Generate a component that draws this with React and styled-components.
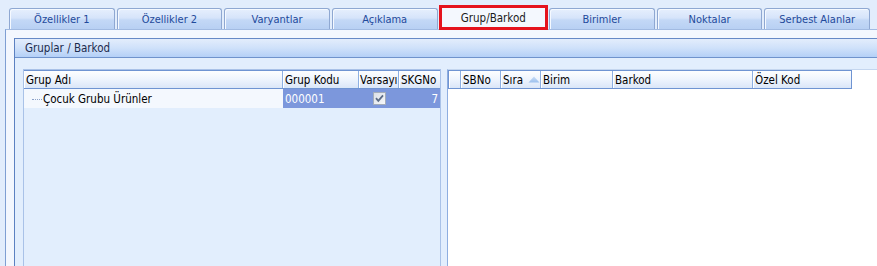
import React from "react";
import styled, { createGlobalStyle } from "styled-components";

const Global = createGlobalStyle`
  html, body { margin: 0; padding: 0; background: #e2edfc; }
  body { font-family: "DejaVu Sans Condensed", "Liberation Sans", Arial, sans-serif; font-size: 11px; }
  #root { width: 877px; height: 266px; overflow: hidden; }
`;

const Page = styled.div`
  width: 877px;
  height: 266px;
  background: #e2edfc;
  display: flex;
  flex-direction: column;
  overflow: hidden;
`;

const TabBar = styled.div`
  height: 29px;
  flex: none;
  display: flex;
  align-items: flex-end;
  gap: 2px;
  padding: 0 7px 0 9px;
  position: relative;
  z-index: 1;
`;

const Tab = styled.div`
  flex: 1;
  box-sizing: border-box;
  height: ${(p) => (p.$active ? "25px" : "21px")};
  margin: ${(p) => (p.$active ? "0 -1px -1px" : "0")};
  border: ${(p) => (p.$active ? "3px solid #e5131d" : "1px solid #8fa8d2")};
  border-bottom: ${(p) => (p.$active ? "3px solid #e5131d" : "none")};
  border-radius: ${(p) => (p.$active ? "0" : "3px 3px 0 0")};
  background: ${(p) =>
    p.$active
      ? "#f4f8fe"
      : "linear-gradient(to bottom, #e6effd 0%, #d6e4fa 45%, #c3d8f6 55%, #b8d0f3 100%)"};
  box-shadow: ${(p) => (p.$active ? "none" : "inset 1px 1px 0 #f5f9ff")};
  color: ${(p) => (p.$active ? "#1b1b1b" : "#1f4a9b")};
  font-size: ${(p) => (p.$active ? "11.5px" : "11px")};
  display: flex;
  align-items: center;
  justify-content: center;
  padding-top: ${(p) => (p.$active ? "0" : "1px")};
  white-space: nowrap;
`;

const Panel = styled.div`
  flex: 1;
  margin-left: 5px;
  border-top: 1px solid #a2bbe2;
  border-left: 1px solid #7f9fd3;
  background: #f3f7fe;
  padding: 8px 0 0 8px;
  display: flex;
  flex-direction: column;
  min-height: 0;
`;

const Group = styled.div`
  flex: 1;
  border-left: 1px solid #5c81c1;
  display: flex;
  flex-direction: column;
  min-height: 0;
`;

const GroupHeader = styled.div`
  height: 18px;
  flex: none;
  border-top: 1px solid #6689c6;
  border-bottom: 1px solid #6f93cc;
  background: linear-gradient(to bottom, #e3edfc 0%, #cfe1fa 50%, #b4d0f7 100%);
  color: #1c2b4d;
  font-size: 11.5px;
  display: flex;
  align-items: center;
  padding-left: 10px;
`;

const GroupBody = styled.div`
  flex: 1;
  background: #e2eefd;
  padding: 11px 0 0 8px;
  display: flex;
  gap: 6px;
  min-height: 0;
  font-size: 11.5px;
`;

const LeftGrid = styled.div`
  width: 416px;
  flex: none;
  border: 1px solid #a9c2e8;
  border-bottom: none;
  background: #e2eefd;
  display: flex;
  flex-direction: column;
`;

const RightGrid = styled.div`
  flex: 1;
  border-left: 1px solid #8eaee0;
  border-top: 1px solid #c4d6ef;
  background: #ffffff;
  display: flex;
  flex-direction: column;
  align-items: flex-start;
`;

const HeaderRow = styled.div`
  display: grid;
  grid-template-columns: ${(p) => p.$cols};
  height: 19px;
  box-sizing: border-box;
  border: 1px solid #6f94d2;
  border-right: ${(p) => (p.$closed ? "1px solid #6f94d2" : "none")};
  border-left: ${(p) => (p.$closed ? "1px solid #6f94d2" : "none")};
  background: linear-gradient(to bottom, #fdfeff 0%, #eef4fd 50%, #dae6f8 100%);
`;

const HeadCell = styled.div`
  box-sizing: border-box;
  border-right: ${(p) => (p.$last ? "none" : "1px solid #8eb0e2")};
  box-shadow: inset 1px 0 0 #ffffff;
  color: #000;
  padding-left: ${(p) => (p.$tight ? "1px" : "2px")};
  display: flex;
  align-items: center;
  white-space: nowrap;
  overflow: hidden;
  gap: 5px;
`;

const DataRow = styled.div`
  display: grid;
  grid-template-columns: ${(p) => p.$cols};
  height: 19px;
`;

const Cell = styled.div`
  background: ${(p) => (p.$selected ? "#7c97dc" : "#f4f8fe")};
  color: ${(p) => (p.$selected ? "#ffffff" : "#000000")};
  display: flex;
  align-items: center;
  justify-content: ${(p) => p.$align || "flex-start"};
  padding: 0 2px 0 ${(p) => p.$indent || "2px"};
  white-space: nowrap;
  overflow: hidden;
`;

const TreeLine = styled.span`
  display: inline-block;
  width: 10px;
  border-top: 1px dotted #8aa0c8;
  margin-right: 1px;
  margin-top: 1px;
`;

const SortArrow = () => (
  <svg width="12" height="7" viewBox="0 0 12 7">
    <defs>
      <linearGradient id="sa" x1="0" y1="0" x2="0" y2="1">
        <stop offset="0" stopColor="#c9ddf6" />
        <stop offset="1" stopColor="#9cc0ee" />
      </linearGradient>
    </defs>
    <path d="M6 0.5 L11.5 6.5 L0.5 6.5 Z" fill="url(#sa)" />
  </svg>
);

const CheckBox = () => (
  <svg width="13" height="13" viewBox="0 0 13 13">
    <defs>
      <linearGradient id="cb" x1="0" y1="0" x2="1" y2="1">
        <stop offset="0" stopColor="#d9dee6" />
        <stop offset="1" stopColor="#f8f9fb" />
      </linearGradient>
    </defs>
    <rect x="0.5" y="0.5" width="12" height="12" fill="url(#cb)" stroke="#a3acba" />
    <path d="M3 6.2 L5.3 8.8 L10 3.4" fill="none" stroke="#5c6c86" strokeWidth="1.8" />
  </svg>
);

const tabs = [
  "Özellikler 1",
  "Özellikler 2",
  "Varyantlar",
  "Açıklama",
  "Grup/Barkod",
  "Birimler",
  "Noktalar",
  "Serbest Alanlar",
];

const leftCols = "259px 76px 40px 1fr";
const rightCols = "12px 40px 40px 72px 140px 98px";

export default function App() {
  return (
    <Page>
      <Global />
      <TabBar>
        {tabs.map((t) => (
          <Tab key={t} $active={t === "Grup/Barkod"}>
            {t}
          </Tab>
        ))}
      </TabBar>
      <Panel>
        <Group>
          <GroupHeader>Gruplar / Barkod</GroupHeader>
          <GroupBody>
            <LeftGrid>
              <HeaderRow $cols={leftCols}>
                <HeadCell>Grup Adı</HeadCell>
                <HeadCell>Grup Kodu</HeadCell>
                <HeadCell $tight>Varsayı</HeadCell>
                <HeadCell $last>SKGNo</HeadCell>
              </HeaderRow>
              <DataRow $cols={leftCols}>
                <Cell $indent="8px">
                  <TreeLine />
                  Çocuk Grubu Ürünler
                </Cell>
                <Cell $selected>000001</Cell>
                <Cell $selected $align="center">
                  <CheckBox />
                </Cell>
                <Cell $selected $align="flex-end">
                  7
                </Cell>
              </DataRow>
            </LeftGrid>
            <RightGrid>
              <HeaderRow $cols={rightCols} $closed>
                <HeadCell />
                <HeadCell>SBNo</HeadCell>
                <HeadCell>
                  Sıra
                  <SortArrow />
                </HeadCell>
                <HeadCell>Birim</HeadCell>
                <HeadCell>Barkod</HeadCell>
                <HeadCell $last>Özel Kod</HeadCell>
              </HeaderRow>
            </RightGrid>
          </GroupBody>
        </Group>
      </Panel>
    </Page>
  );
}
